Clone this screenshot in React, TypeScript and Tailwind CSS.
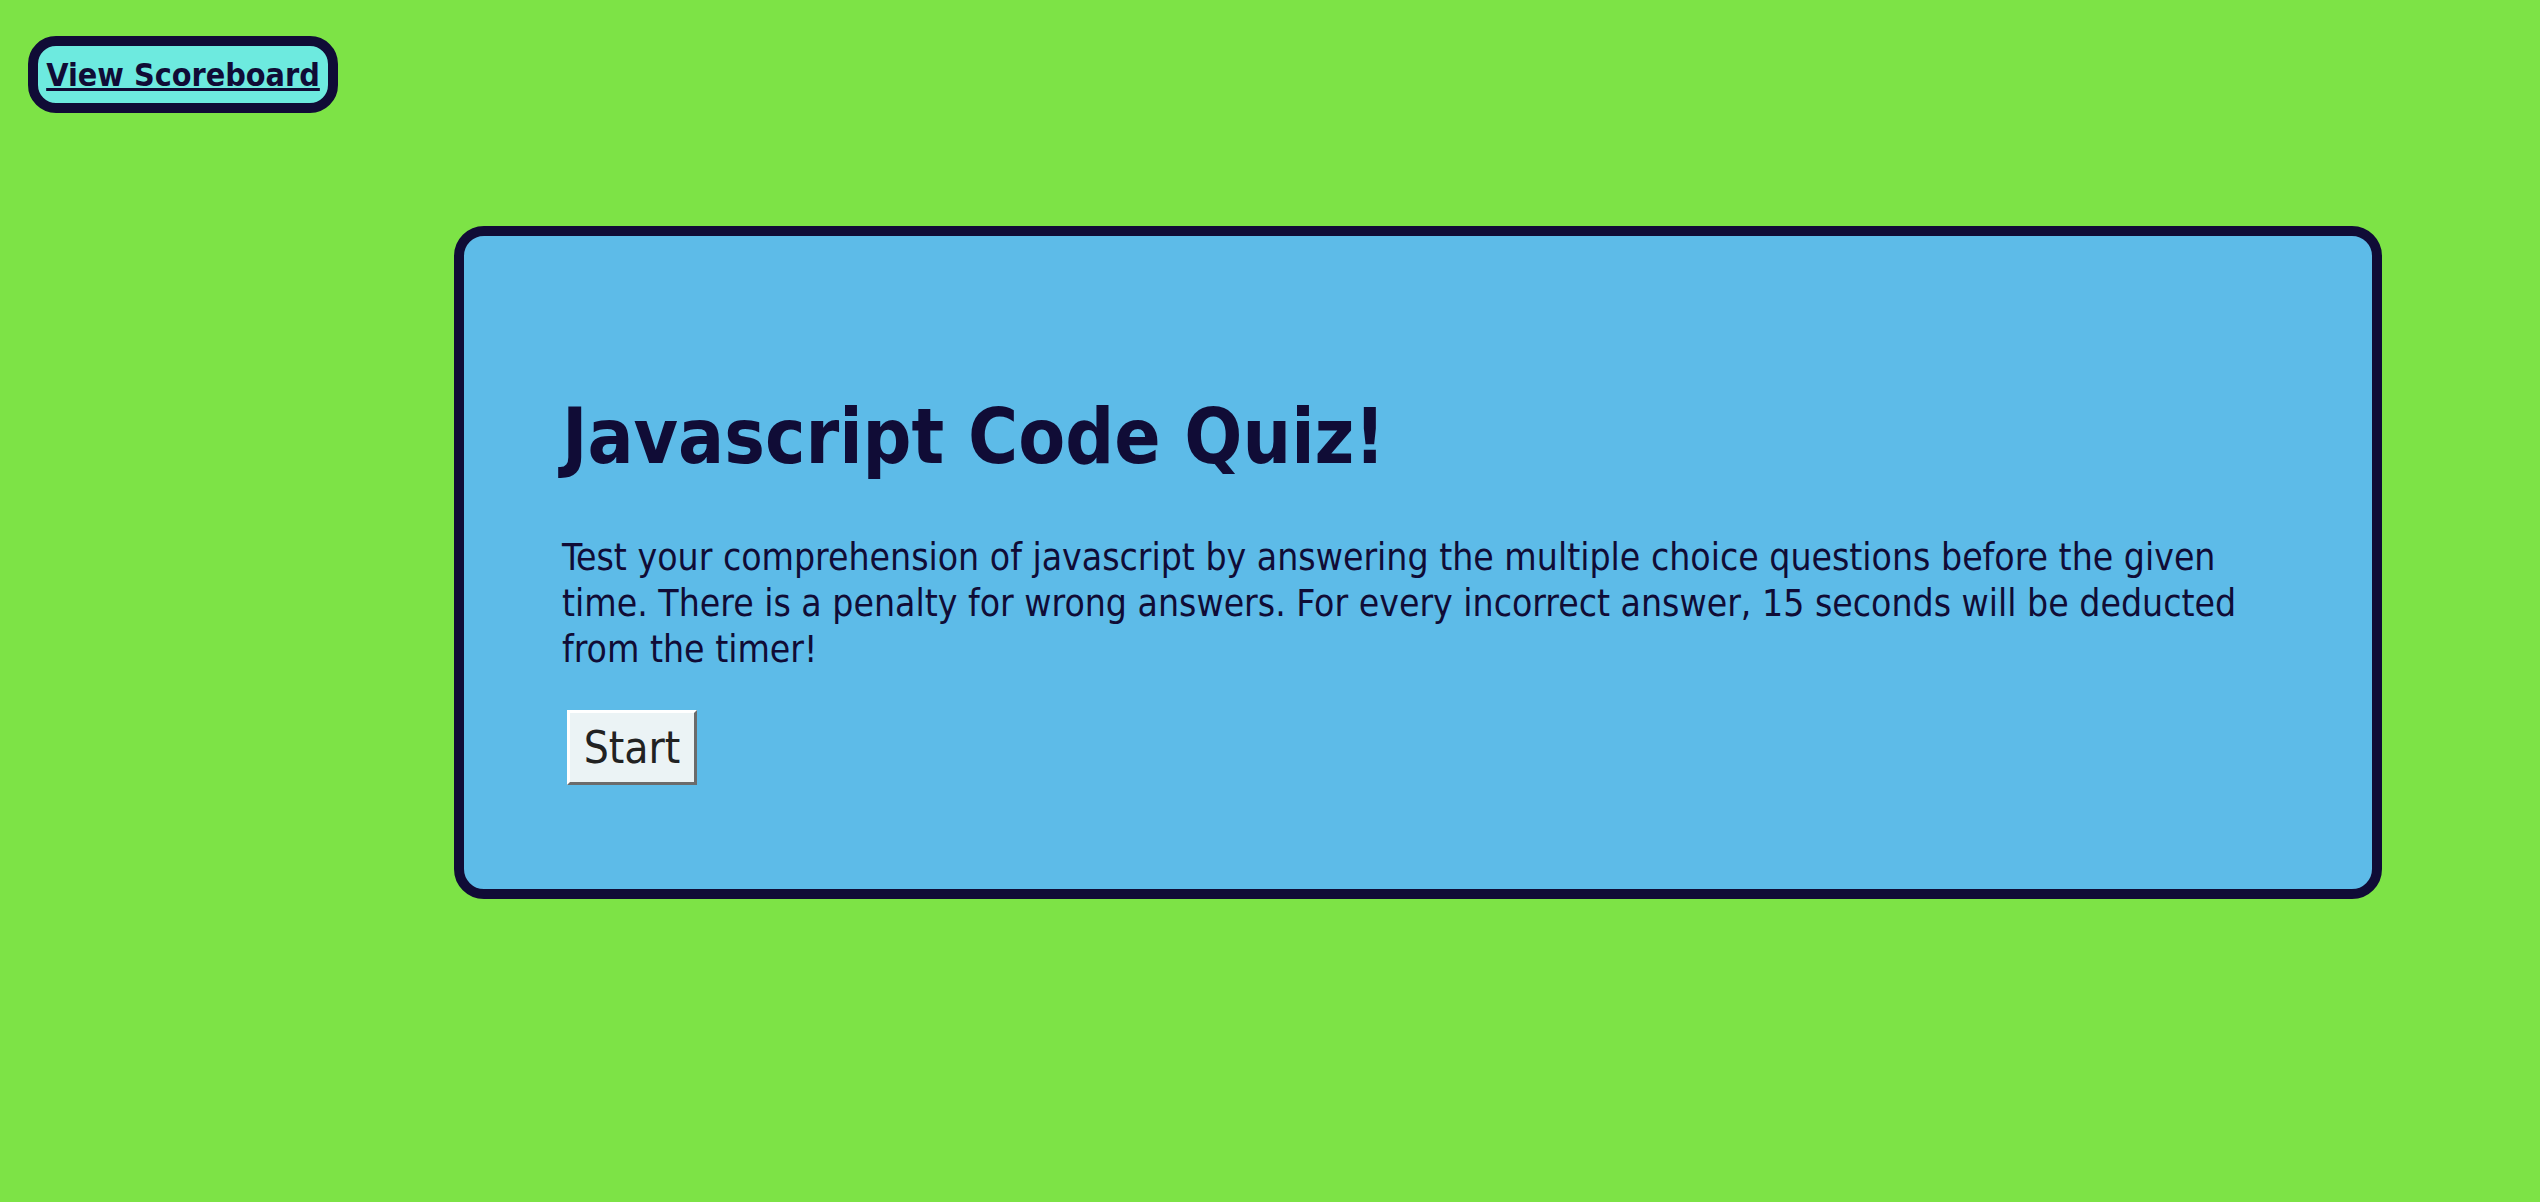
import React from "react";

const font = { fontFamily: '"DejaVu Sans Condensed", "DejaVu Sans", sans-serif' };

export default function App() {
  return (
    <div className="min-h-[1202px] w-full bg-[#7de346] text-[#100c36]" style={font}>
      <header className="pl-[28px] pt-[36px]">
        <a
          href="#"
          className="inline-flex h-[77px] w-[310px] items-center justify-center rounded-[28px] border-[10px] border-[#100c36] bg-[#6deadf] text-[32px] font-bold text-[#100c36] underline"
        >
          View Scoreboard
        </a>
      </header>

      <main className="ml-[454px] mt-[113px] w-[1928px]">
        <section className="h-[673px] rounded-[30px] border-[10px] border-[#100c36] bg-[#5dbbe8] pl-[98px] pr-[110px] pt-[157px]">
          <h1 className="text-[76px] font-bold leading-[1.164]">Javascript Code Quiz!</h1>
          <p className="mt-[54px] text-[37px] leading-[46px]">
            Test your comprehension of javascript by answering the multiple choice questions before the given
            time. There is a penalty for wrong answers. For every incorrect answer, 15 seconds will be deducted
            from the timer!
          </p>
          <button className="mt-[37px] ml-[5px] flex h-[75px] w-[130px] items-center justify-center border-[3px] border-b-[#6b6b6b] border-l-white border-r-[#6b6b6b] border-t-white bg-[#ebf3f5] px-0 text-[44px] text-[#222]">
            Start
          </button>
        </section>
      </main>
    </div>
  );
}
